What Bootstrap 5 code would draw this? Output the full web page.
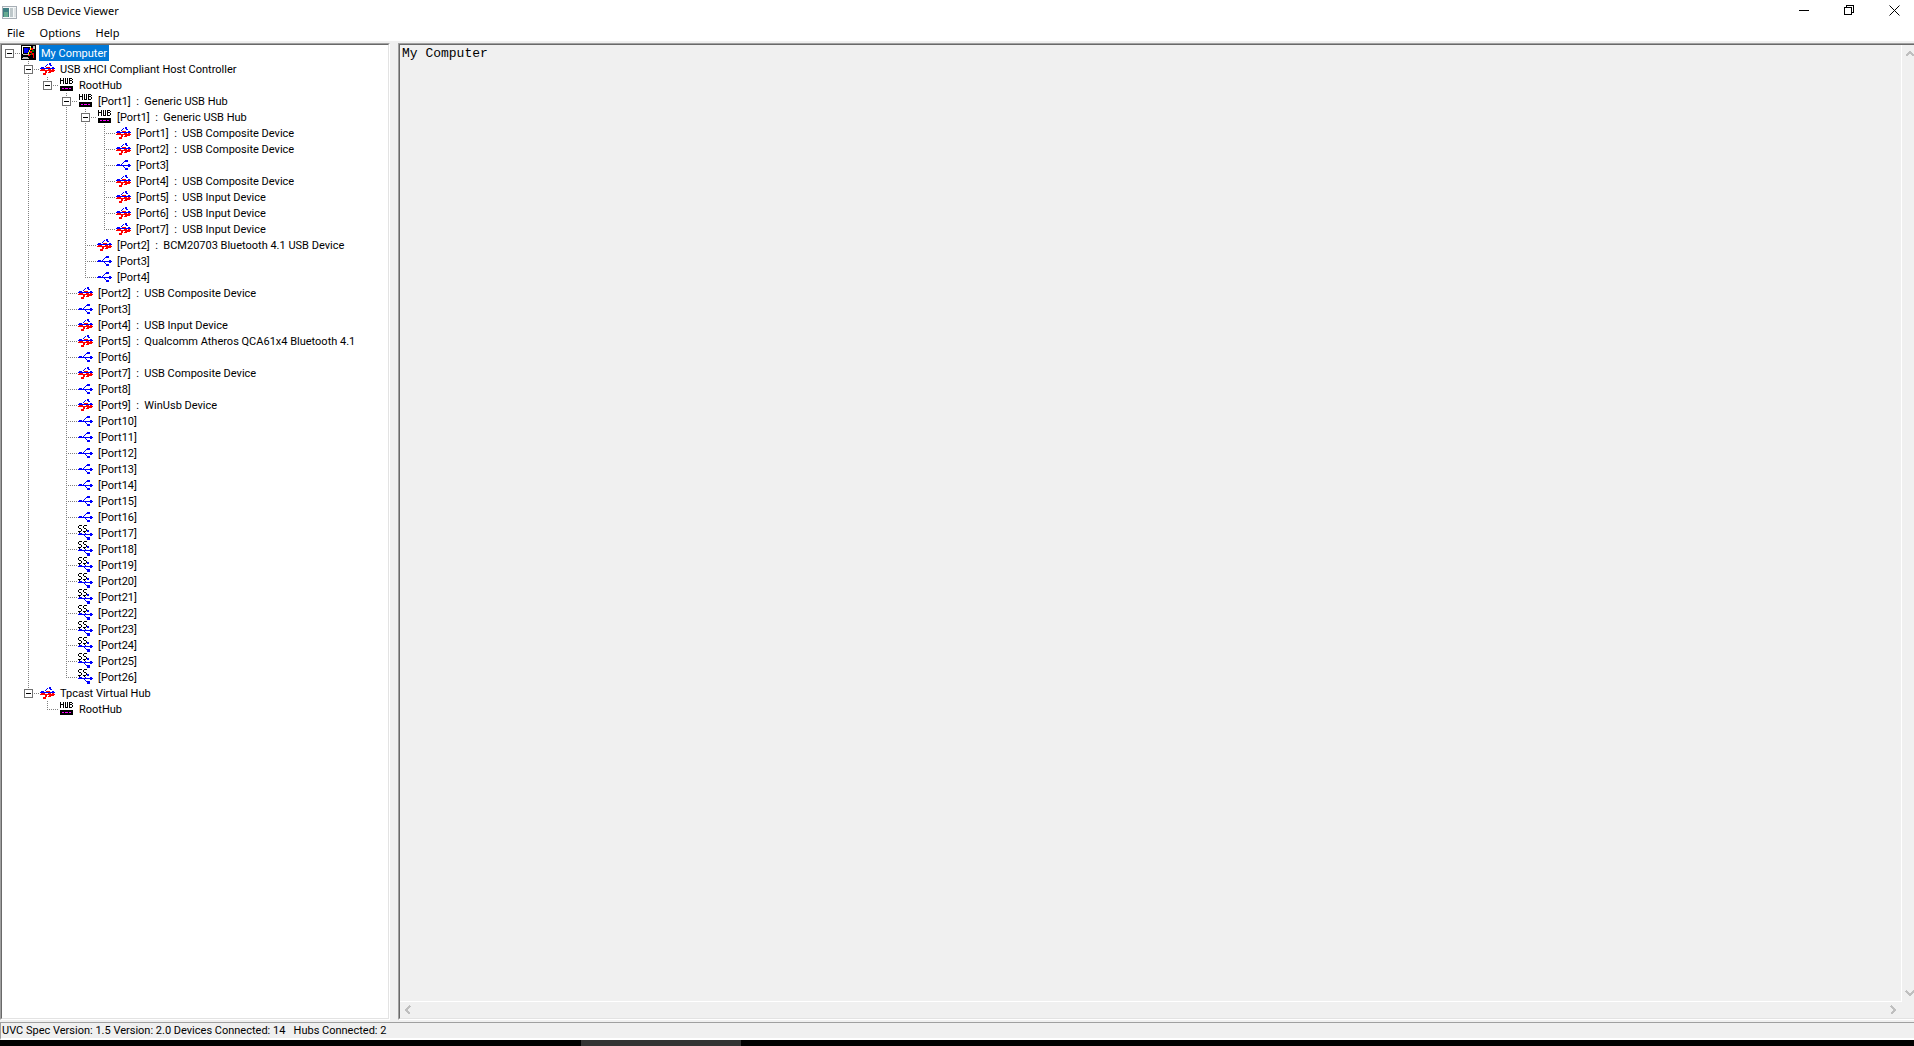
<!DOCTYPE html>
<html lang="en">
<head>
<meta charset="utf-8">
<meta name="viewport" content="width=device-width, initial-scale=1">
<title>USB Device Viewer</title>
<link href="https://cdn.jsdelivr.net/npm/bootstrap@5.3.0/dist/css/bootstrap.min.css" rel="stylesheet">
<style>
  body { font-family: Roboto, "Liberation Sans", sans-serif; font-size: 11px; line-height: 16px; color: #000; background: #fff; }
  button { padding: 0; border: 0; background: none; color: inherit; }
  svg { display: block; shape-rendering: crispEdges; flex: none; }
  .ui-font { font-family: "Noto Sans", "Open Sans", sans-serif; font-size: 11px; }
  .titlebar { height: 24px; padding: 0 1px 0 2px; gap: 6px; }
  .titlebar h1 { font-size: 11px; line-height: 22px; padding-bottom: 2px; font-weight: 400; }
  .win-buttons { gap: 7px; }
  .win-buttons button { width: 38px; height: 20px; }
  .menubar { height: 17px; padding-left: 7px; gap: 15px; line-height: 16px; }
  .workspace { background: #f0f0f0; padding-top: 2px; gap: 8px; min-height: 0; }
  .sunken { border: 1px solid; border-color: #a0a0a0 #fff #fff #a0a0a0; }
  .sunken-inner { border: 1px solid; border-color: #696969 #e3e3e3 #e3e3e3 #696969; }
  .tree-pane { width: 390px; flex: none; }
  .text-pane { border-right: 0; min-width: 0; }
  .text-pane .sunken-inner { border-right: 0; }
  .report { resize: none; border: 0; outline: 0; background: #f0f0f0; color: #000; padding: 1px 2px; font: 13px/16px "Liberation Mono", "Courier New", monospace; overflow: hidden; border-right: 1px solid #fff; border-bottom: 1px solid #fff; border-radius: 0; }
  .vbar { width: 12px; padding: 5px 0; overflow: hidden; }
  .vbar button, .hbar button { width: 12px; height: 7px; }
  .hbar { height: 16px; padding: 0 16px 0 3px; }
  .hbar button { height: 10px; }
  .statusbar { background: #f0f0f0; padding-top: 2px; }
  .status-text { height: 18px; border: solid; border-width: 1px 0 2px 1px; border-color: #a0a0a0 #fff #fff #a0a0a0; padding: 1px 0 0 1px; line-height: 14px; white-space: pre; }
  .taskbar { height: 6px; background: #000; padding-left: 581px; }
  .taskbar span { width: 160px; background: #333; }

  .tree, .tree ul { list-style: none; margin: 0; padding: 0; }
  .tree li { padding-left: 19px; background: repeating-linear-gradient(#808080 0 1px, transparent 1px 2px) 7px 0 / 1px 100% no-repeat; }
  .tree li:last-child { background-size: 1px 9px; }
  .tree > li:last-child { background: none; }
  .node { height: 16px; margin-left: -19px; padding-left: 3px; display: flex; align-items: center; white-space: pre; }
  .node::before { content: ""; width: 12px; margin-left: 4px; height: 1px; flex: none; background: repeating-linear-gradient(90deg, #808080 0 1px, transparent 1px 2px); }
  .node:has(button)::before { content: none; }
  .node button { width: 9px; height: 9px; flex: none; border: 1px solid #707070; background: linear-gradient(#000, #000) center / 5px 1px no-repeat #fff; }
  .dots { width: 7px; height: 1px; flex: none; background: repeating-linear-gradient(90deg, transparent 0 1px, #808080 1px 2px); }
  .caption-text { height: 16px; line-height: 14px; padding: 2px 2px 0; margin-left: 2px; }
  .selected .caption-text { background: #0078d7; color: #fff; }
</style>
</head>
<body class="vh-100 d-flex flex-column overflow-hidden">

<svg width="0" height="0" class="position-absolute" aria-hidden="true">
  <symbol id="usb" viewBox="0 0 16 16">
    <path fill="#00f" d="M0 8h15v1H0zM1 7h3v1H1zM12 7h2v3h-2zM5 7h1v1H5zM6 6h1v1H6zM7 5h1v1H7zM9 3h3v2H9zM8 4h1v1H8zM7 9h1v1H7zM8 10h1v1H8zM9 11h3v2H9z"/>
  </symbol>
  <symbol id="dev" viewBox="0 0 16 16">
    <path fill="#00f" d="M0 7h15v1H0zM1 6h3v1H1zM12 6h2v3h-2zM5 5h1v1H5zM6 4h1v1H6zM7 3h1v1H7zM9 2h2v2H9zM10 4h2v1h-2z"/>
    <path fill="#f00" d="M1 8h4v2H1zM0 9h15v1H0zM6 6h4v1H6zM8 8h3v1H8zM12 8h2v3h-2zM5 10h2v1H5zM8 11h3v1H8zM9 10h3v1H9zM3 12h3v2H3zM5 11h2v1H5z"/>
  </symbol>
  <symbol id="ss" viewBox="0 0 16 16">
    <path fill="#000" d="M1 0h3v1H1zM0 1h1v2H0zM1 3h2v1H1zM3 4h1v2H3zM0 6h3v1H0zM1 7h1v1H1zM6 0h3v1H6zM5 1h1v2H5zM6 3h2v1H6zM8 4h1v2H8zM5 6h3v1H5zM6 7h1v1H6z"/>
    <path fill="#00f" d="M0 9h15v1H0zM1 8h3v1H1zM12 8h2v3h-2zM9 5h2v2H9zM7 8h1v1H7zM6 10h1v1H6zM7 11h1v1H7zM8 12h1v1H8zM9 12h3v3H9z"/>
  </symbol>
  <symbol id="hub" viewBox="0 0 16 16">
    <path fill="#000" d="M1 1h1v6H1zM4 1h1v6H4zM2 3h2v1H2zM6 1h1v5H6zM8 1h1v5H8zM6 6h3v1H6zM10 1h1v6h-1zM11 1h2v1h-2zM13 2h1v1h-1zM11 3h2v1h-2zM13 4h1v2h-1zM11 6h2v1h-2zM1 9h13v5H1z"/>
    <path fill="#f0f" d="M3 11h2v1H3zM6 11h3v1H6zM10 11h2v1h-2z"/>
  </symbol>
  <symbol id="pc" viewBox="0 0 16 16">
    <path d="M0 0h15v15H0z"/>
    <path fill="#fff" d="M1 1h9v1H1zM1 2h1v7H1z"/>
    <path fill="#c0c0c0" d="M2 9h7v1H2zM2 12h5v1H2zM1 13h7v1H1zM12 1h2v3h-2z"/>
    <path fill="#000080" d="M3 3h6v5H3z"/><path fill="#00f" d="M3 3h4v5H3z"/>
    <path fill="#ff0" d="M9 2h1v3H9zM8 5h1v2H8zM7 7h1v2H7z"/>
    <path fill="#f00" d="M10 3h2v2h-2zM9 6h2v2H9zM8 9h2v1H8zM7 10h2v1H7zM11 8h2v2h-2zM12 10h1v3h-1z"/>
    <path fill="#008000" d="M11 5h2v2h-2zM10 8h1v2h-1z"/>
  </symbol>
</svg>

<header class="ui-font">
  <div class="titlebar d-flex align-items-center">
    <svg width="15" height="13" viewBox="0 0 15 13" aria-hidden="true"><path fill="#a7aeb5" d="M0 0h15v13H0z"/><path fill="#f4f7f8" d="M1 1h13v11H1z"/><path fill="#3f7f82" d="M1 2h6v9H1z"/><path fill="#65aa90" d="M2 6h4v5H2z"/><path fill="#bdc7ca" d="M8 2h3v9H8z"/><path fill="#dde2e4" d="M12 2h2v9h-2z"/></svg>
    <h1 class="mb-0 flex-grow-1">USB Device Viewer</h1>
    <div class="win-buttons d-flex align-self-start">
      <button type="button" aria-label="Minimize" class="d-flex align-items-center justify-content-center"><svg width="10" height="10"><path d="M0 5h10v1H0z"/></svg></button>
      <button type="button" aria-label="Restore" class="d-flex align-items-center justify-content-center"><svg width="10" height="10" fill="none" stroke="#000"><path d="M.5 2.5h7v7h-7zM2.500 2V.5h7v7H8"/></svg></button>
      <button type="button" aria-label="Close" class="d-flex align-items-center justify-content-center"><svg width="11" height="11" stroke="#000"><path shape-rendering="auto" d="M.5.5l10 10M10.500.5l-10 10"/></svg></button>
    </div>
  </div>
  <nav class="menubar d-flex" aria-label="Menu">
    <button type="button">File</button>
    <button type="button">Options</button>
    <button type="button">Help</button>
  </nav>
</header>

<main class="workspace d-flex flex-grow-1">
  <section class="tree-pane sunken d-flex" aria-label="Devices">
    <div class="sunken-inner flex-grow-1 bg-white overflow-hidden">
      <ul class="tree">
        <li><div class="node selected"><button type="button" aria-label="Collapse"></button><i class="dots"></i><svg width="16" height="16"><use href="#pc"/></svg><span class="caption-text">My Computer</span></div>
          <ul>
            <li><div class="node"><button type="button" aria-label="Collapse"></button><i class="dots"></i><svg width="16" height="16"><use href="#dev"/></svg><span class="caption-text">USB xHCI Compliant Host Controller</span></div>
              <ul>
                <li><div class="node"><button type="button" aria-label="Collapse"></button><i class="dots"></i><svg width="16" height="16"><use href="#hub"/></svg><span class="caption-text">RootHub</span></div>
                  <ul>
                    <li><div class="node"><button type="button" aria-label="Collapse"></button><i class="dots"></i><svg width="16" height="16"><use href="#hub"/></svg><span class="caption-text">[Port1]  :  Generic USB Hub</span></div>
                      <ul>
                        <li><div class="node"><button type="button" aria-label="Collapse"></button><i class="dots"></i><svg width="16" height="16"><use href="#hub"/></svg><span class="caption-text">[Port1]  :  Generic USB Hub</span></div>
                          <ul>
                            <li><div class="node"><svg width="16" height="16"><use href="#dev"/></svg><span class="caption-text">[Port1]  :  USB Composite Device</span></div></li>
                            <li><div class="node"><svg width="16" height="16"><use href="#dev"/></svg><span class="caption-text">[Port2]  :  USB Composite Device</span></div></li>
                            <li><div class="node"><svg width="16" height="16"><use href="#usb"/></svg><span class="caption-text">[Port3]</span></div></li>
                            <li><div class="node"><svg width="16" height="16"><use href="#dev"/></svg><span class="caption-text">[Port4]  :  USB Composite Device</span></div></li>
                            <li><div class="node"><svg width="16" height="16"><use href="#dev"/></svg><span class="caption-text">[Port5]  :  USB Input Device</span></div></li>
                            <li><div class="node"><svg width="16" height="16"><use href="#dev"/></svg><span class="caption-text">[Port6]  :  USB Input Device</span></div></li>
                            <li><div class="node"><svg width="16" height="16"><use href="#dev"/></svg><span class="caption-text">[Port7]  :  USB Input Device</span></div></li>
                          </ul>
                        </li>
                        <li><div class="node"><svg width="16" height="16"><use href="#dev"/></svg><span class="caption-text">[Port2]  :  BCM20703 Bluetooth 4.1 USB Device</span></div></li>
                        <li><div class="node"><svg width="16" height="16"><use href="#usb"/></svg><span class="caption-text">[Port3]</span></div></li>
                        <li><div class="node"><svg width="16" height="16"><use href="#usb"/></svg><span class="caption-text">[Port4]</span></div></li>
                      </ul>
                    </li>
                    <li><div class="node"><svg width="16" height="16"><use href="#dev"/></svg><span class="caption-text">[Port2]  :  USB Composite Device</span></div></li>
                    <li><div class="node"><svg width="16" height="16"><use href="#usb"/></svg><span class="caption-text">[Port3]</span></div></li>
                    <li><div class="node"><svg width="16" height="16"><use href="#dev"/></svg><span class="caption-text">[Port4]  :  USB Input Device</span></div></li>
                    <li><div class="node"><svg width="16" height="16"><use href="#dev"/></svg><span class="caption-text">[Port5]  :  Qualcomm Atheros QCA61x4 Bluetooth 4.1</span></div></li>
                    <li><div class="node"><svg width="16" height="16"><use href="#usb"/></svg><span class="caption-text">[Port6]</span></div></li>
                    <li><div class="node"><svg width="16" height="16"><use href="#dev"/></svg><span class="caption-text">[Port7]  :  USB Composite Device</span></div></li>
                    <li><div class="node"><svg width="16" height="16"><use href="#usb"/></svg><span class="caption-text">[Port8]</span></div></li>
                    <li><div class="node"><svg width="16" height="16"><use href="#dev"/></svg><span class="caption-text">[Port9]  :  WinUsb Device</span></div></li>
                    <li><div class="node"><svg width="16" height="16"><use href="#usb"/></svg><span class="caption-text">[Port10]</span></div></li>
                    <li><div class="node"><svg width="16" height="16"><use href="#usb"/></svg><span class="caption-text">[Port11]</span></div></li>
                    <li><div class="node"><svg width="16" height="16"><use href="#usb"/></svg><span class="caption-text">[Port12]</span></div></li>
                    <li><div class="node"><svg width="16" height="16"><use href="#usb"/></svg><span class="caption-text">[Port13]</span></div></li>
                    <li><div class="node"><svg width="16" height="16"><use href="#usb"/></svg><span class="caption-text">[Port14]</span></div></li>
                    <li><div class="node"><svg width="16" height="16"><use href="#usb"/></svg><span class="caption-text">[Port15]</span></div></li>
                    <li><div class="node"><svg width="16" height="16"><use href="#usb"/></svg><span class="caption-text">[Port16]</span></div></li>
                    <li><div class="node"><svg width="16" height="16"><use href="#ss"/></svg><span class="caption-text">[Port17]</span></div></li>
                    <li><div class="node"><svg width="16" height="16"><use href="#ss"/></svg><span class="caption-text">[Port18]</span></div></li>
                    <li><div class="node"><svg width="16" height="16"><use href="#ss"/></svg><span class="caption-text">[Port19]</span></div></li>
                    <li><div class="node"><svg width="16" height="16"><use href="#ss"/></svg><span class="caption-text">[Port20]</span></div></li>
                    <li><div class="node"><svg width="16" height="16"><use href="#ss"/></svg><span class="caption-text">[Port21]</span></div></li>
                    <li><div class="node"><svg width="16" height="16"><use href="#ss"/></svg><span class="caption-text">[Port22]</span></div></li>
                    <li><div class="node"><svg width="16" height="16"><use href="#ss"/></svg><span class="caption-text">[Port23]</span></div></li>
                    <li><div class="node"><svg width="16" height="16"><use href="#ss"/></svg><span class="caption-text">[Port24]</span></div></li>
                    <li><div class="node"><svg width="16" height="16"><use href="#ss"/></svg><span class="caption-text">[Port25]</span></div></li>
                    <li><div class="node"><svg width="16" height="16"><use href="#ss"/></svg><span class="caption-text">[Port26]</span></div></li>
                  </ul>
                </li>
              </ul>
            </li>
            <li><div class="node"><button type="button" aria-label="Collapse"></button><i class="dots"></i><svg width="16" height="16"><use href="#dev"/></svg><span class="caption-text">Tpcast Virtual Hub</span></div>
              <ul>
                <li><div class="node"><svg width="16" height="16"><use href="#hub"/></svg><span class="caption-text">RootHub</span></div></li>
              </ul>
            </li>
          </ul>
        </li>
      </ul>
    </div>
  </section>

  <section class="text-pane sunken d-flex flex-grow-1" aria-label="Details">
    <div class="sunken-inner flex-grow-1 d-flex flex-column">
      <div class="d-flex flex-grow-1">
        <textarea class="report flex-grow-1" readonly aria-label="Device details">My Computer</textarea>
        <div class="vbar d-flex flex-column justify-content-between">
          <button type="button" aria-label="Scroll up"><svg width="12" height="7" fill="none" stroke="#bfbfbf" stroke-width="2"><path d="M4 6l4-4 4 4"/></svg></button>
          <button type="button" aria-label="Scroll down"><svg width="12" height="7" fill="none" stroke="#bfbfbf" stroke-width="2"><path d="M4 1l4 4 4-4"/></svg></button>
        </div>
      </div>
      <div class="hbar d-flex align-items-center justify-content-between">
        <button type="button" aria-label="Scroll left"><svg width="12" height="10" fill="none" stroke="#bfbfbf" stroke-width="2"><path d="M7 1L3 5l4 4"/></svg></button>
        <button type="button" aria-label="Scroll right"><svg width="12" height="10" fill="none" stroke="#bfbfbf" stroke-width="2"><path d="M5 1l4 4-4 4"/></svg></button>
      </div>
    </div>
  </section>
</main>

<footer class="statusbar">
  <div class="status-text">UVC Spec Version: 1.5 Version: 2.0 Devices Connected: 14   Hubs Connected: 2</div>
  <div class="taskbar d-flex"><span></span></div>
</footer>

<script src="https://cdn.jsdelivr.net/npm/bootstrap@5.3.0/dist/js/bootstrap.bundle.min.js"></script>
</body>
</html>
